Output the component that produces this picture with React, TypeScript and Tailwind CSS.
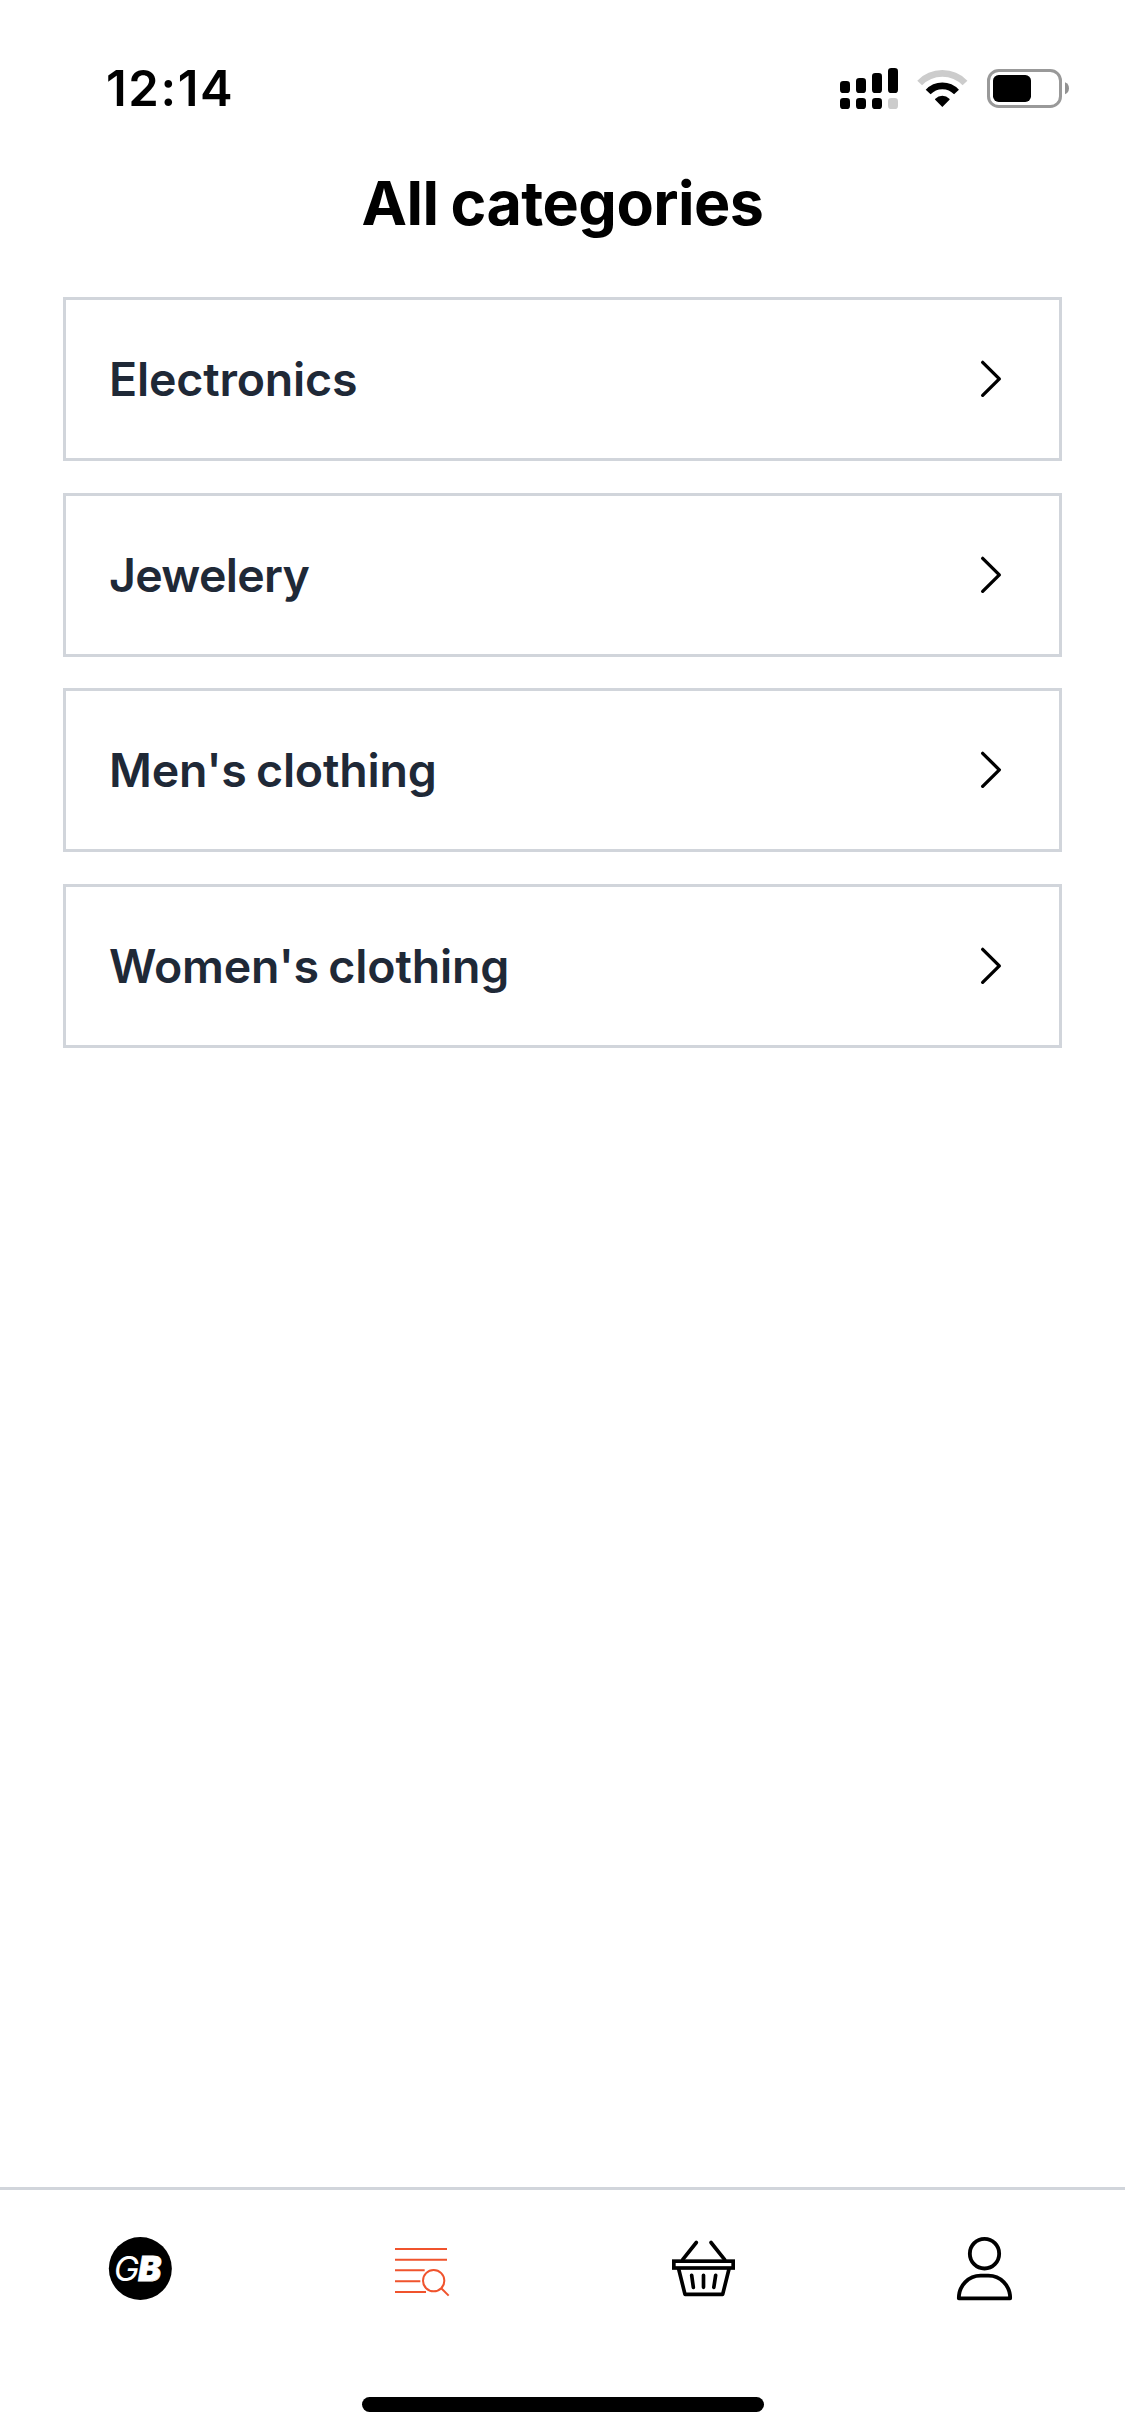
import React from "react";

const categories = [
  { name: "Electronics", spacing: "tracking-[-0.18px]", gap: "" },
  { name: "Jewelery", spacing: "tracking-[-0.7px]", gap: "mt-8" },
  { name: "Men's clothing", spacing: "tracking-[-0.22px] [word-spacing:-2px]", gap: "mt-[31px]" },
  { name: "Women's clothing", spacing: "tracking-[-0.17px] [word-spacing:-2px]", gap: "mt-8" },
];

function StatusIcons() {
  return (
    <svg className="h-20 w-[270px]" viewBox="0 0 810 240" fill="none">
      <g fill="#000">
        <rect x="60" y="93" width="30" height="36" rx="10" />
        <rect x="108" y="84" width="30" height="45" rx="10" />
        <rect x="156" y="69" width="30" height="60" rx="10" />
        <rect x="204" y="54" width="30" height="75" rx="10" />
        <rect x="60" y="144" width="30" height="33" rx="10" />
        <rect x="108" y="144" width="30" height="33" rx="10" />
        <rect x="156" y="144" width="30" height="33" rx="10" />
      </g>
      <rect x="204" y="144" width="30" height="33" rx="10" fill="#ccc" />
      <path d="M299 99A94.5 94.5 0 0 1 435 99" stroke="#ccc" strokeWidth="20" />
      <path d="M324.5 126A58 58 0 0 1 409.5 126" stroke="#000" strokeWidth="20" />
      <path d="M367 171L345.5 149.5Q344 147.5 346 146A30 30 0 0 1 388 146Q390 147.5 388.5 149.5Z" fill="#000" />
      <rect x="505.5" y="61.5" width="216" height="108" rx="31" stroke="#999" strokeWidth="9" />
      <rect x="519" y="75" width="114" height="81" rx="17" fill="#000" />
      <path d="M735 97c8 3 12 10 12 18s-4 15-12 18z" fill="#929292" />
    </svg>
  );
}

function Chevron() {
  return (
    <svg className="h-10 w-6" viewBox="120 237 72 120" fill="none">
      <path d="M128 247L178 296.5L128 346" stroke="#000" strokeWidth="10" strokeLinecap="round" strokeLinejoin="round" />
    </svg>
  );
}

function LogoIcon() {
  return (
    <svg className="size-[90px]" viewBox="0 120 270 270">
      <circle cx="151" cy="265.5" r="94.5" fill="#000" />
      <g fill="#fff" fontFamily="Inter, sans-serif" fontStyle="italic">
        <text x="71" y="303.5" fontSize="103" fontWeight="400">G</text>
        <text x="145" y="303.5" fontSize="103" fontWeight="900" stroke="#fff" strokeWidth="2.5">B</text>
      </g>
    </svg>
  );
}

function CategoriesIcon() {
  return (
    <svg className="size-[90px]" viewBox="-15 0 270 270" fill="none" stroke="#f0532d" strokeWidth="6">
      <path d="M45 87H201M45 119H201M45 151H134M45 183.5H121M45 216H138" />
      <circle cx="161" cy="182" r="32" />
      <path d="M183 204L206 227" />
    </svg>
  );
}

function BasketIcon() {
  return (
    <svg className="size-[90px]" viewBox="15 0 270 270" fill="none" stroke="#000" strokeWidth="11" strokeLinecap="round" strokeLinejoin="round">
      <rect x="56.5" y="123.5" width="178" height="20.5" strokeLinejoin="miter" />
      <path d="M124 67.5L83 119M168 67.5L209 119" />
      <path d="M71 147L90 223H203L222 147" />
      <path d="M110 166L115 202M145.5 166V202M182 166L176.5 202" />
    </svg>
  );
}

function ProfileIcon() {
  return (
    <svg className="size-[90px]" viewBox="15 0 270 270" fill="none" stroke="#000" strokeWidth="11.5" strokeLinejoin="round">
      <ellipse cx="133.5" cy="101" rx="44" ry="44.5" />
      <path d="M56.5 235C56.5 196 86 167 122 167H145C181 167 210.5 196 210.5 235Z" />
    </svg>
  );
}

export default function App() {
  return (
    <div className="flex h-[2436px] w-[1125px] flex-col bg-white font-['Inter',sans-serif]">
      <header className="flex items-start justify-between pt-[50px] pr-[35px] pl-[106px]">
        <span className="text-[49px] leading-[78px] font-semibold tracking-[1.6px] text-black">12:14</span>
        <StatusIcons />
      </header>

      <h1 className="mt-[37px] text-center text-[61px] leading-[72px] font-bold tracking-[-0.52px] text-black [word-spacing:-2px]">
        All categories
      </h1>

      <main className="mt-[58px] flex flex-1 flex-col px-[63px]">
        {categories.map((c) => (
          <button
            key={c.name}
            className={`flex h-[164px] w-full shrink-0 items-center justify-between border-[3px] border-[#d1d5db] pr-[55px] pl-[43px] ${c.gap}`}
          >
            <span className={`text-[46.5px] leading-[60px] font-semibold text-[#1f2937] ${c.spacing}`}>{c.name}</span>
            <Chevron />
          </button>
        ))}
      </main>

      <footer className="flex h-[249px] flex-col items-center border-t-[3px] border-[#d1d5db] pt-[30px]">
        <nav className="flex w-full justify-between px-[90px]">
          <LogoIcon />
          <CategoriesIcon />
          <BasketIcon />
          <ProfileIcon />
        </nav>
        <div className="mt-[87px] h-[15px] w-[402px] rounded-full bg-black" />
      </footer>
    </div>
  );
}
